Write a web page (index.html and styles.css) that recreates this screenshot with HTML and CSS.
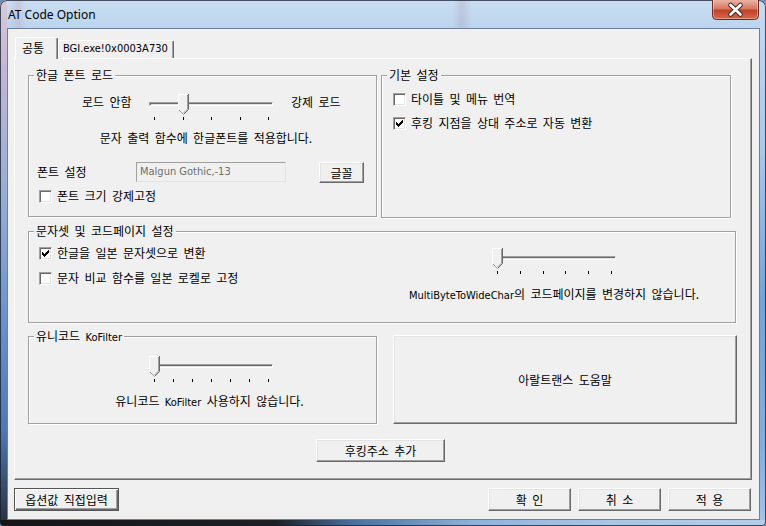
FILE: index.html
```html
<!DOCTYPE html>
<html lang="ko">
<head>
  <meta charset="UTF-8">
  <title>AT Code Option</title>
  <link rel="stylesheet" href="styles.css">
</head>
<body>

  <div class="window">
    <div class="titlebar">
      <span class="caption">AT Code Option</span>
      <div class="close-btn">
        <svg width="47" height="20" viewBox="0 0 47 20">
          <defs>
            <linearGradient id="closeGrad" x1="0" y1="0" x2="0" y2="1">
              <stop offset="0" stop-color="#eab3a5"/>
              <stop offset="0.45" stop-color="#d8765f"/>
              <stop offset="0.52" stop-color="#c2412b"/>
              <stop offset="1" stop-color="#d8694b"/>
            </linearGradient>
          </defs>
          <path d="M0.5 0 V15.5 Q0.5 19.5 4.5 19.5 H42.5 Q46.5 19.5 46.5 15.5 V0" fill="url(#closeGrad)" stroke="#6e2d24"/>
          <path d="M1.5 0 V15 Q1.5 18.5 5 18.5 H42 Q45.5 18.5 45.5 15 V0" fill="none" stroke="rgba(255,255,255,0.35)"/>
          <path d="M18.5 5 L28.5 14.5 M28.5 5 L18.5 14.5" stroke="#3e2b2b" stroke-width="4.6" stroke-linecap="round"/>
          <path d="M18.5 5 L28.5 14.5 M28.5 5 L18.5 14.5" stroke="#ffffff" stroke-width="2.6" stroke-linecap="round"/>
        </svg>
      </div>
    </div>

    <div class="frame">
      <div class="client">

        <div class="tabs">
          <div class="tab active">공통</div>
          <div class="tab latin">BGI.exe!0x0003A730</div>
        </div>

        <div class="panel">
          <div class="row top-row">
            <div class="group font-load">
              <div class="group-title">한글 폰트 로드</div>
              <div class="slider-row">
                <span class="slider-label">로드 안함</span>
                <div class="slider">
                  <div class="track"></div>
                  <div class="thumb at-2">
                    <svg width="11" height="21" viewBox="0 0 11 21">
                      <path d="M0.5 0.5 H10.5 V15.5 L5.5 20.5 L0.5 15.5 Z" fill="#f0f0f0"/>
                      <path d="M0.5 15.5 V0.5 H10" fill="none" stroke="#ffffff"/>
                      <path d="M1 16 L5 20" fill="none" stroke="#a0a0a0"/>
                      <path d="M10.5 0 V15.5 L5.5 20.5" fill="none" stroke="#696969"/>
                      <path d="M9.5 1 V15 L5.5 19" fill="none" stroke="#a0a0a0"/>
                    </svg>
                  </div>
                  <div class="ticks"><i></i><i></i><i></i><i></i><i></i></div>
                </div>
                <span class="slider-label right">강제 로드</span>
              </div>
              <div class="group-note note-font">문자 출력 함수에 한글폰트를 적용합니다.</div>
              <div class="font-row">
                <span class="font-label">폰트 설정</span>
                <div class="textbox latin">Malgun Gothic,-13</div>
                <button class="btn font-btn">글꼴</button>
              </div>
              <div class="check-row font-check">
                <span class="checkbox"></span>폰트 크기 강제고정
              </div>
            </div>

            <div class="group basic">
              <div class="group-title">기본 설정</div>
              <div class="check-row">
                <span class="checkbox"></span>타이틀 및 메뉴 번역
              </div>
              <div class="check-row">
                <span class="checkbox">
                  <svg width="7" height="7" viewBox="0 0 7 7" fill="#000"><rect x="6" y="0" width="1" height="1"/><rect x="5" y="1" width="2" height="1"/><rect x="0" y="2" width="1" height="1"/><rect x="4" y="2" width="3" height="1"/><rect x="0" y="3" width="2" height="1"/><rect x="3" y="3" width="3" height="1"/><rect x="0" y="4" width="5" height="1"/><rect x="1" y="5" width="3" height="1"/><rect x="2" y="6" width="1" height="1"/></svg>
                </span>후킹 지점을 상대 주소로 자동 변환
              </div>
            </div>
          </div>

          <div class="group charset">
            <div class="group-title">문자셋 및 코드페이지 설정</div>
            <div class="charset-body">
              <div class="charset-checks">
                <div class="check-row first">
                  <span class="checkbox">
                    <svg width="7" height="7" viewBox="0 0 7 7" fill="#000"><rect x="6" y="0" width="1" height="1"/><rect x="5" y="1" width="2" height="1"/><rect x="0" y="2" width="1" height="1"/><rect x="4" y="2" width="3" height="1"/><rect x="0" y="3" width="2" height="1"/><rect x="3" y="3" width="3" height="1"/><rect x="0" y="4" width="5" height="1"/><rect x="1" y="5" width="3" height="1"/><rect x="2" y="6" width="1" height="1"/></svg>
                  </span>한글을 일본 문자셋으로 변환
                </div>
                <div class="check-row second">
                  <span class="checkbox"></span>문자 비교 함수를 일본 로켈로 고정
                </div>
              </div>
              <div class="charset-slider">
                <div class="slider">
                  <div class="track"></div>
                  <div class="thumb">
                    <svg width="11" height="21" viewBox="0 0 11 21">
                      <path d="M0.5 0.5 H10.5 V15.5 L5.5 20.5 L0.5 15.5 Z" fill="#f0f0f0"/>
                      <path d="M0.5 15.5 V0.5 H10" fill="none" stroke="#ffffff"/>
                      <path d="M1 16 L5 20" fill="none" stroke="#a0a0a0"/>
                      <path d="M10.5 0 V15.5 L5.5 20.5" fill="none" stroke="#696969"/>
                      <path d="M9.5 1 V15 L5.5 19" fill="none" stroke="#a0a0a0"/>
                    </svg>
                  </div>
                  <div class="ticks"><i></i><i></i><i></i><i></i><i></i><i></i></div>
                </div>
                <div class="slider-caption"><span class="latin">MultiByteToWideChar</span>의 코드페이지를 변경하지 않습니다.</div>
              </div>
            </div>
          </div>

          <div class="row mid-row">
            <div class="group kofilter">
              <div class="group-title">유니코드 <span class="latin">KoFilter</span></div>
              <div class="slider ko-slider">
                <div class="track"></div>
                <div class="thumb">
                  <svg width="11" height="21" viewBox="0 0 11 21">
                    <path d="M0.5 0.5 H10.5 V15.5 L5.5 20.5 L0.5 15.5 Z" fill="#f0f0f0"/>
                    <path d="M0.5 15.5 V0.5 H10" fill="none" stroke="#ffffff"/>
                    <path d="M1 16 L5 20" fill="none" stroke="#a0a0a0"/>
                    <path d="M10.5 0 V15.5 L5.5 20.5" fill="none" stroke="#696969"/>
                    <path d="M9.5 1 V15 L5.5 19" fill="none" stroke="#a0a0a0"/>
                  </svg>
                </div>
                <div class="ticks"><i></i><i></i><i></i><i></i><i></i><i></i><i></i></div>
              </div>
              <div class="group-note note-ko">유니코드 <span class="latin">KoFilter</span> 사용하지 않습니다.</div>
            </div>
            <button class="btn help-btn">아랄트랜스 도움말</button>
          </div>

          <div class="hook-row">
            <button class="btn hook-btn">후킹주소 추가</button>
          </div>
        </div>

        <div class="bottom-bar">
          <button class="btn default-btn">옵션값 직접입력</button>
          <div class="bottom-actions">
            <button class="btn action-btn">확 인</button>
            <button class="btn action-btn">취 소</button>
            <button class="btn action-btn">적 용</button>
          </div>
        </div>

      </div>
    </div>
  </div>

</body>
</html>
```

FILE: styles.css
```css
* {
  margin: 0;
  padding: 0;
  box-sizing: border-box;
}

body {
  width: 766px;
  height: 526px;
  overflow: hidden;
  background-color: #6f8db5;
  font-family: "Noto Sans CJK KR", "Noto Sans", sans-serif;
  font-size: 12px;
  word-spacing: 2px;
  color: #000;
}

.latin {
  font-family: "DejaVu Sans Condensed", "Liberation Sans", sans-serif;
  font-size: 11px;
  word-spacing: 0;
}

/* window frame */
.window {
  width: 766px;
  height: 526px;
  display: flex;
  flex-direction: column;
  border-radius: 7px 7px 4px 4px;
  box-shadow: inset 0 0 0 1px rgba(20, 30, 45, 0.75);
  background:
    linear-gradient(to right, #151515 0, #1d1f24 36%, #486f9e 46%, #8fb3db 62%, #a9c6e6 80%, #b4cde9 100%) bottom / 100% 6px no-repeat,
    linear-gradient(to bottom, #d6cadb 0, #c3b6d2 70px, #93add8 200px, #6690cb 330px, #4d78b4 430px, #2c3340 520px) left / 7px 100% no-repeat,
    linear-gradient(to bottom, #c6dbf1 0, #a9c8ea 150px, #74a3d8 300px, #86afdf 450px, #a6c4e6 100%) right / 6px 100% no-repeat,
    linear-gradient(to right, transparent 10px, rgba(205, 150, 170, 0.3) 18px, transparent 26px, transparent 452px, rgba(170, 150, 175, 0.3) 462px, transparent 472px),
    linear-gradient(to bottom, #cadef2 0, #bcd4ee 28px);
}

.titlebar {
  height: 28px;
  display: flex;
  align-items: center;
  padding-left: 8px;
}

.caption {
  flex: 1;
  font-family: "Noto Sans", sans-serif;
  font-size: 12px;
  word-spacing: 0;
  color: #000;
}

.close-btn {
  align-self: flex-start;
  height: 20px;
  margin-right: 7px;
}

.close-btn svg {
  display: block;
}

.frame {
  flex: 1;
  padding: 0 6px 6px 7px;
}

.client {
  width: 753px;
  height: 492px;
  border: 1px solid #6d8099;
  background-color: #f0f0f0;
  padding-top: 8px;
}

/* tabs */
.tabs {
  display: flex;
  align-items: flex-end;
  height: 21px;
  margin-left: 7px;
}

.tab {
  height: 18px;
  line-height: 16px;
  background-color: #f0f0f0;
  border-top: 1px solid #fff;
  border-left: 1px solid #fff;
  border-right: 1px solid #696969;
  box-shadow: inset -1px 0 0 #a0a0a0;
  border-radius: 2px 2px 0 0;
  padding-left: 4px;
  width: 116px;
}

.tab.active {
  position: relative;
  z-index: 1;
  width: 43px;
  height: 22px;
  line-height: 20px;
  margin-bottom: -1px;
  padding-left: 6px;
}

.panel {
  margin-left: 6px;
  width: 738px;
  height: 422px;
  border: 1px solid;
  border-color: #fff #696969 #696969 #fff;
  box-shadow: inset -1px -1px 0 #a0a0a0;
  padding: 16px 0 0 13px;
}

.row {
  display: flex;
  align-items: flex-start;
}

/* group boxes */
.group {
  border: 1px solid #a0a0a0;
  box-shadow: 1px 1px 0 #fff, inset 1px 1px 0 #fff;
}

.group-title {
  display: table;
  margin: -8px 0 0 5px;
  padding: 0 2px;
  line-height: 14px;
  background-color: #f0f0f0;
}

.font-load {
  width: 349px;
  height: 142px;
  margin-right: 4px;
}

.basic {
  width: 350px;
  height: 143px;
}

.charset {
  width: 708px;
  height: 92px;
  margin-top: 13px;
}

.mid-row {
  margin-top: 12px;
}

.kofilter {
  width: 349px;
  height: 88px;
  margin-top: 1px;
}

/* sliders */
.slider-row {
  display: flex;
  align-items: flex-start;
  margin-top: 12px;
  padding-left: 53px;
}

.slider-label {
  width: 67px;
  line-height: 14px;
  margin-top: 1px;
}

.slider-label.right {
  width: auto;
  margin-left: 18px;
}

.slider {
  position: relative;
  width: 124px;
  height: 27px;
  padding-top: 8px;
}

.track {
  height: 4px;
  border: 1px solid;
  border-color: #a0a0a0 #fff #fff #a0a0a0;
  box-shadow: inset 1px 1px 0 #696969, inset -1px -1px 0 #e3e3e3;
}

.thumb {
  position: absolute;
  top: 0;
  left: 0;
  width: 11px;
  height: 21px;
}

.thumb svg {
  display: block;
}

.thumb.at-2 {
  left: 29px;
}

.ticks {
  display: flex;
  justify-content: space-between;
  margin-top: 11px;
  padding: 0 4px 0 5px;
}

.ticks i {
  display: block;
  width: 1px;
  height: 3px;
  background-color: #000;
}

.group-note {
  line-height: 14px;
  text-align: center;
}

.note-font {
  margin-top: 10px;
  padding-left: 7px;
}

.note-ko {
  margin-top: 11px;
  padding-left: 14px;
}

.ko-slider {
  margin: 11px 0 0 120px;
}

/* font row */
.font-row {
  display: flex;
  align-items: flex-start;
  margin-top: 17px;
  padding-left: 8px;
}

.font-label {
  width: 99px;
  line-height: 20px;
}

.textbox {
  width: 150px;
  height: 20px;
  line-height: 18px;
  padding-left: 3px;
  color: #6d6d6d;
  border: 1px solid;
  border-color: #a0a0a0 #e3e3e3 #e3e3e3 #a0a0a0;
  background-color: #f0f0f0;
}

.font-btn {
  width: 45px;
  height: 21px;
  margin-left: 33px;
}

/* checkboxes */
.check-row {
  display: flex;
  align-items: flex-start;
  line-height: 14px;
  margin: 10px 0 0 11px;
}

.check-row .checkbox {
  margin: 1px 5px 0 0;
}

.font-check {
  margin: 6px 0 0 10px;
}

.checkbox {
  display: block;
  width: 13px;
  height: 13px;
  padding: 2px;
  border: 1px solid;
  border-color: #a0a0a0 #fff #fff #a0a0a0;
  box-shadow: inset 1px 1px 0 #696969, inset -1px -1px 0 #e3e3e3;
  background-color: #fff;
}

.checkbox svg {
  display: block;
}

.charset-body {
  display: flex;
  align-items: flex-start;
}

.charset-checks {
  width: 365px;
}

.charset-checks .check-row {
  margin-left: 10px;
}

.charset-checks .first {
  margin-top: 8px;
}

.charset-checks .second {
  margin-top: 11px;
}

.charset-slider {
  width: 320px;
  display: flex;
  flex-direction: column;
  align-items: center;
  margin-top: 10px;
}

.slider-caption {
  line-height: 14px;
  margin-top: 12px;
}

/* buttons */
.btn {
  font-family: inherit;
  font-size: 12px;
  word-spacing: 2px;
  color: #000;
  background-color: #f0f0f0;
  border: 1px solid;
  border-color: #fff #696969 #696969 #fff;
  box-shadow: inset -1px -1px 0 #a0a0a0, inset 1px 1px 0 #e3e3e3;
  cursor: pointer;
}

.help-btn {
  width: 344px;
  height: 89px;
  margin-left: 16px;
}

.hook-row {
  margin-top: 15px;
  padding-left: 288px;
}

.hook-btn {
  width: 129px;
  height: 23px;
}

.bottom-bar {
  display: flex;
  justify-content: space-between;
  width: 737px;
  margin: 8px 0 0 6px;
}

.default-btn {
  width: 105px;
  height: 23px;
  border-color: #555;
  box-shadow: inset 1px 1px 0 #fff, inset -1px -1px 0 #696969, inset -2px -2px 0 #a0a0a0;
}

.bottom-actions {
  display: flex;
  gap: 7px;
}

.action-btn {
  width: 83px;
  height: 23px;
}
```
